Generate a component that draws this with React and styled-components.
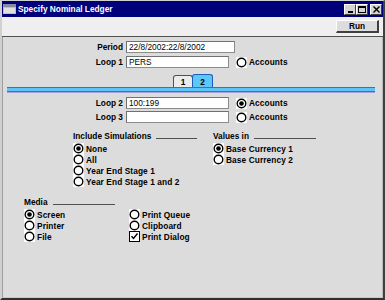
import React from "react";
import styled, { createGlobalStyle } from "styled-components";

const Global = createGlobalStyle`
  html, body { margin: 0; padding: 0; background: #dcdcdc; }
  body { font-family: "Liberation Sans", Arial, sans-serif; }
  * { box-sizing: border-box; }
`;

const Window = styled.div`
  width: 385px;
  height: 300px;
  display: flex;
  flex-direction: column;
  background: #d4d4d4;
  border-top: 1px solid #d0d0d0;
  border-left: 2px solid #d0d0d0;
  border-right: 2px solid #404040;
  border-bottom: 2px solid #303030;
`;

const TitleBar = styled.div`
  height: 16px;
  flex: none;
  background: #00007b;
  display: flex;
  align-items: center;
  padding: 0 1px 0 1px;
`;

const TitleText = styled.span`
  color: #fff;
  font-weight: bold;
  font-size: 8.3px;
  margin-left: 2px;
  flex: 1;
`;

const TitleButtons = styled.div`
  display: flex;
  align-items: center;
`;

const TitleButton = styled.div`
  width: 12px;
  height: 11px;
  background: #d4d4d4;
  border-top: 1px solid #fff;
  border-left: 1px solid #fff;
  border-right: 1px solid #404040;
  border-bottom: 1px solid #404040;
  margin-left: ${(p) => p.$gap || 0}px;
  display: flex;
  align-items: center;
  justify-content: center;
`;

const Toolbar = styled.div`
  height: 20px;
  flex: none;
  background: #efefef;
  border-bottom: 1px solid #505050;
  display: flex;
  justify-content: flex-end;
  align-items: flex-start;
  padding: 3px 4px 0 0;
`;

const Button = styled.div`
  width: 43px;
  height: 13px;
  background: #dcdcdc;
  border-top: 1px solid #fff;
  border-left: 1px solid #fff;
  border-right: 2px solid #404040;
  border-bottom: 2px solid #404040;
  font-size: 8.3px;
  font-weight: bold;
  display: flex;
  align-items: center;
  justify-content: center;
`;

const Body = styled.div`
  flex: 1;
  background: #dcdcdc;
  border-left: 1px solid #a0a0a0;
  border-right: 1px solid #b8b8b8;
  border-bottom: 1px solid #c8c8c8;
  padding-top: 4px;
  font-size: 8.3px;
  font-weight: bold;
  color: #000;
`;

const FieldRow = styled.div`
  display: flex;
  align-items: center;
  height: 12px;
  margin-top: ${(p) => p.$mt || 0}px;
`;

const Label = styled.span`
  width: 120px;
  text-align: right;
  margin-right: 3px;
`;

const TextInput = styled.input`
  width: ${(p) => p.$w}px;
  height: 12px;
  margin: 0;
  background: #fff;
  border: 1px solid #8c8c8c;
  border-top-color: #707070;
  border-left-color: #707070;
  padding: 0 2px;
  font-family: "Liberation Sans", Arial, sans-serif;
  font-size: 8.3px;
  color: #000;
  outline: none;
`;

const Choice = styled.label`
  display: flex;
  align-items: center;
  height: 11px;
  gap: 2px;
  margin-left: ${(p) => p.$ml || 0}px;
  white-space: nowrap;
  letter-spacing: 0.1px;
`;

const TabRow = styled.div`
  display: flex;
  align-items: flex-end;
  height: 13px;
  margin-top: 6px;
  padding-left: 170px;
`;

const Tab = styled.div`
  width: ${(p) => (p.$active ? 21 : 20)}px;
  height: ${(p) => (p.$active ? 13 : 12)}px;
  margin-left: ${(p) => (p.$active ? -1 : 0)}px;
  background: ${(p) => (p.$active ? "#5cc8f7" : "#ececec")};
  border: 1px solid ${(p) => (p.$active ? "#1d5fb8" : "#505050")};
  border-bottom: none;
  border-radius: 3px 3px 0 0;
  display: flex;
  align-items: center;
  justify-content: center;
  padding-top: 1px;
`;

const Band = styled.div`
  height: 6px;
  margin: 0 7px 0 4px;
  background: linear-gradient(
    #2c72dc 0 1px,
    #5cc4f7 1px 4px,
    #2c72dc 4px 5px,
    #a8a0d8 5px 6px
  );
`;

const Sections = styled.div`
  display: grid;
  grid-template-columns: 124px 103px;
  column-gap: 16px;
  padding-left: 70px;
  margin-top: 7px;
`;

const Section = styled.div`
  display: flex;
  flex-direction: column;
  width: ${(p) => (p.$w ? `${p.$w}px` : "auto")};
`;

const Heading = styled.div`
  display: flex;
  align-items: flex-end;
  height: 11px;
  margin-bottom: 2px;
`;

const HeadingLine = styled.span`
  flex: 1;
  margin-left: 5px;
  margin-bottom: 2px;
  border-bottom: 1px solid #505050;
`;

const MediaBlock = styled.div`
  padding-left: 21px;
  margin-top: 9px;
`;

const OptionGrid = styled.div`
  display: grid;
  grid-template-columns: 105px auto;
  grid-template-rows: repeat(3, 11px);
  grid-auto-flow: column;
`;

function Radio({ on }) {
  return (
    <svg width="11" height="11" viewBox="0 0 11 11">
      <rect width="11" height="11" fill="#fff" />
      <circle cx="5.5" cy="5.5" r="4.3" fill="#fff" stroke="#000" strokeWidth="1.4" />
      {on && <circle cx="5.5" cy="5.5" r="2.3" fill="#000" />}
    </svg>
  );
}

function Check({ on }) {
  return (
    <svg width="11" height="11" viewBox="0 0 11 11">
      <rect x="0.5" y="0.5" width="10" height="10" fill="#fff" stroke="#000" />
      {on && <path d="M2.5 5.2 L4.5 7.5 L8.5 2.5" fill="none" stroke="#000" strokeWidth="1.4" />}
    </svg>
  );
}

function WinIcon() {
  return (
    <svg width="13" height="10" viewBox="0 0 13 10">
      <rect x="0" y="0" width="13" height="10" fill="#c0c0c0" />
      <rect x="0" y="0" width="13" height="3" fill="#8a8aa0" />
      <rect x="1" y="4" width="11" height="5" fill="#e0e0e0" />
    </svg>
  );
}

function Opt({ type = "radio", on, children, ml }) {
  return (
    <Choice $ml={ml}>
      {type === "radio" ? <Radio on={on} /> : <Check on={on} />}
      <span>{children}</span>
    </Choice>
  );
}

export default function App() {
  return (
    <>
      <Global />
      <Window>
        <TitleBar>
          <WinIcon />
          <TitleText>Specify Nominal Ledger</TitleText>
          <TitleButtons>
            <TitleButton>
              <svg width="7" height="7" viewBox="0 0 7 7">
                <rect x="1" y="5" width="5" height="2" fill="#000" />
              </svg>
            </TitleButton>
            <TitleButton>
              <svg width="8" height="7" viewBox="0 0 8 7">
                <rect x="0.5" y="0.5" width="7" height="6" fill="none" stroke="#000" />
                <rect x="0" y="0" width="8" height="2" fill="#000" />
              </svg>
            </TitleButton>
            <TitleButton $gap={2}>
              <svg width="7" height="7" viewBox="0 0 7 7">
                <path d="M0.5 0.5 L6.5 6.5 M6.5 0.5 L0.5 6.5" stroke="#000" strokeWidth="1.4" />
              </svg>
            </TitleButton>
          </TitleButtons>
        </TitleBar>
        <Toolbar>
          <Button>Run</Button>
        </Toolbar>
        <Body>
          <FieldRow>
            <Label>Period</Label>
            <TextInput $w={109} readOnly value="22/8/2002:22/8/2002" />
          </FieldRow>
          <FieldRow $mt={3}>
            <Label>Loop 1</Label>
            <TextInput $w={103} readOnly value="PERS" />
            <Opt ml={7}>Accounts</Opt>
          </FieldRow>
          <TabRow>
            <Tab>1</Tab>
            <Tab $active>2</Tab>
          </TabRow>
          <Band />
          <FieldRow $mt={4}>
            <Label>Loop 2</Label>
            <TextInput $w={103} readOnly value="100:199" />
            <Opt ml={7} on>Accounts</Opt>
          </FieldRow>
          <FieldRow $mt={2}>
            <Label>Loop 3</Label>
            <TextInput $w={103} readOnly value="" />
            <Opt ml={7}>Accounts</Opt>
          </FieldRow>
          <Sections>
            <Section>
              <Heading>
                Include Simulations
                <HeadingLine />
              </Heading>
              <Opt on>None</Opt>
              <Opt>All</Opt>
              <Opt>Year End Stage 1</Opt>
              <Opt>Year End Stage 1 and 2</Opt>
            </Section>
            <Section>
              <Heading>
                Values in
                <HeadingLine />
              </Heading>
              <Opt on>Base Currency 1</Opt>
              <Opt>Base Currency 2</Opt>
            </Section>
          </Sections>
          <MediaBlock>
            <Section $w={91}>
              <Heading>
                Media
                <HeadingLine />
              </Heading>
            </Section>
            <OptionGrid>
              <Opt on>Screen</Opt>
              <Opt>Printer</Opt>
              <Opt>File</Opt>
              <Opt>Print Queue</Opt>
              <Opt>Clipboard</Opt>
              <Opt type="check" on>Print Dialog</Opt>
            </OptionGrid>
          </MediaBlock>
        </Body>
      </Window>
    </>
  );
}
